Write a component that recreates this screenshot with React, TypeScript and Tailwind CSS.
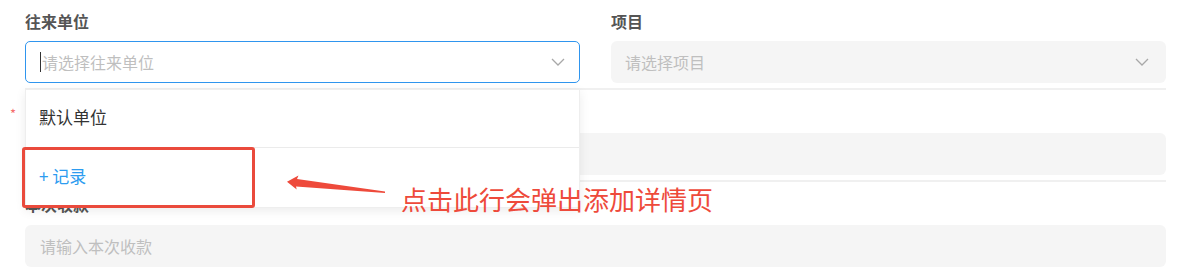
import React from 'react';

const font = { fontFamily: '"Noto Sans CJK SC", "Noto Sans", sans-serif' };

const Chevron = () => (
  <svg width="14" height="8" viewBox="0 0 14 8" fill="none" className="shrink-0">
    <path d="M1 1l6 6 6-6" stroke="#a8a8a8" strokeWidth="1.3" />
  </svg>
);

const Divider = () => <div className="mt-[5px] h-[2px] bg-[#f0f0f0]" />;

const Label = ({ children, required, className }: { children?: React.ReactNode; required?: boolean; className?: string }) => (
  <div className={`relative flex items-center text-[16px] font-bold text-[#555] ${className ?? ''}`}>
    {required && <span className="absolute -left-[15px] top-[17px] text-[13px] font-normal leading-none text-[#f56c6c]">*</span>}
    {children}
  </div>
);

export default function App() {
  return (
    <div className="relative h-[272px] w-[1177px] overflow-hidden bg-white pl-[25px] pr-[11px]" style={font}>
      {/* 往来单位 / 项目 */}
      <div className="grid grid-cols-2 gap-[31px]">
        <div>
          <Label className="h-[41px]">往来单位</Label>
          <div className="flex h-[42px] items-center justify-between rounded-[5px] border border-[#2f95ee] bg-white pl-[14px] pr-[14px]">
            <span className="flex items-center text-[16px] text-[#bfbfbf]">
              <span className="mr-[1px] h-[20px] w-[1px] bg-[#333]" />
              请选择往来单位
            </span>
            <Chevron />
          </div>
        </div>
        <div>
          <Label className="h-[41px]">项目</Label>
          <div className="flex h-[42px] items-center justify-between rounded-[6px] bg-[#f5f5f5] pl-[14px] pr-[17px]">
            <span className="text-[16px] text-[#bfbfbf]">请选择项目</span>
            <Chevron />
          </div>
        </div>
      </div>
      <Divider />

      {/* 必填行（标签被下拉框遮住） */}
      <Label required className="h-[43px]" />
      <div className="h-[42px] rounded-[6px] bg-[#f5f5f5]" />
      <Divider />

      {/* 本次收款 */}
      <Label className="h-[43px]">本次收款</Label>
      <div className="flex h-[42px] items-center rounded-[6px] bg-[#f5f5f5] pl-[15px]">
        <span className="text-[16px] text-[#bfbfbf]">请输入本次收款</span>
      </div>

      {/* 下拉选项 */}
      <div className="absolute left-[25px] top-[89px] w-[555px] border border-[#eeeeee] bg-white shadow-[0_3px_10px_rgba(0,0,0,0.08)]">
        <div className="flex h-[58px] items-center border-b border-[#ebebeb] pb-[3px] pl-[13px] text-[17px] text-[#333]">默认单位</div>
        <div className="flex h-[59px] items-center pb-[3px] pl-[13px] text-[17px] text-[#2d9cf0]">+ 记录</div>
      </div>

      {/* 标注 */}
      <div className="absolute left-[22px] top-[147px] h-[61px] w-[233px] rounded-[3px] border-[3px] border-[#ea4a3c]" />
      <svg className="absolute left-[280px] top-[170px]" width="110" height="30" viewBox="0 0 110 30">
        <polygon points="7,11.7 18.5,5.5 17,9 105,21.5 105,23 16,16.5 16.7,19.5" fill="#ee4a3b" />
      </svg>
      <div className="absolute left-[401px] top-[181px] text-[26px] leading-[36px] text-[#ee4a3b]">点击此行会弹出添加详情页</div>
    </div>
  );
}
